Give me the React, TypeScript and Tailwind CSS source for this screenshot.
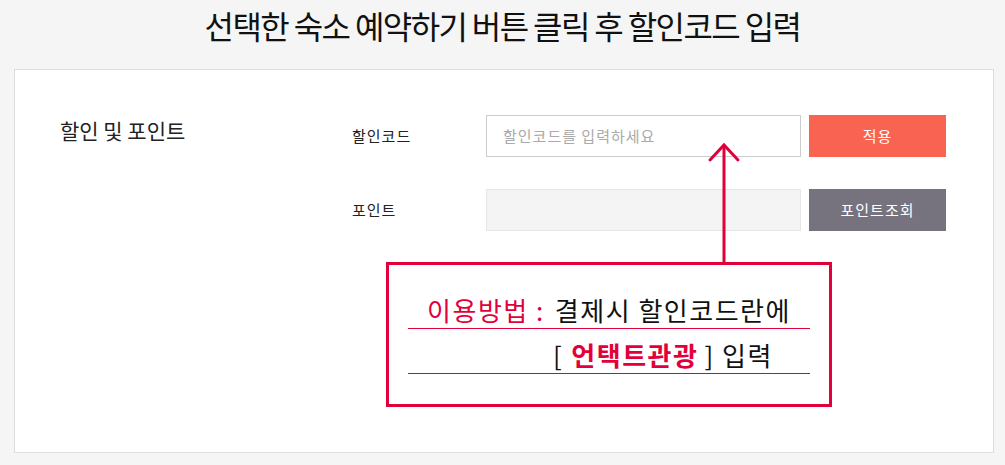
import React from "react";

const RED = "#e2003b";

export default function App() {
  return (
    <div className="w-[1005px] h-[465px] bg-[#f5f5f5] font-['Noto_Sans_CJK_KR',sans-serif] text-[#111] overflow-hidden">
      <h1 className="h-[69px] flex items-center justify-center pb-[19px] text-[32px] font-normal tracking-[-1.6px] text-[#111]">
        선택한 숙소 예약하기 버튼 클릭 후 할인코드 입력
      </h1>
      <div className="relative ml-[14px] w-[980px] h-[384px] bg-white border border-[#dcdcdc] flex">
        <div className="w-[337px] pl-[45px] pt-[44px] text-[21px] leading-[32px] text-[#222]">
          할인 및 포인트
        </div>
        <div className="pt-[45px] flex flex-col">
          <div className="flex items-center h-[42px]">
            <div className="w-[134px] text-[15px] tracking-[1px] text-[#222]">할인코드</div>
            <div className="w-[315px] h-[42px] border border-[#cccccc] bg-white flex items-center pl-[16px] text-[15px] tracking-[1px] text-[#aaaaaa]">
              할인코드를 입력하세요
            </div>
            <button className="ml-[8px] w-[137px] h-[42px] bg-[#f96352] text-white text-[15px] tracking-[1px]">
              적용
            </button>
          </div>
          <div className="flex items-center h-[42px] mt-[32px]">
            <div className="w-[134px] text-[15px] tracking-[1px] text-[#222]">포인트</div>
            <div className="w-[315px] h-[42px] border border-[#e6e6e6] bg-[#f4f4f4]" />
            <button className="ml-[8px] w-[137px] h-[42px] bg-[#76737f] text-white text-[15px] tracking-[1px]">
              포인트조회
            </button>
          </div>
          <div className="ml-[34px] mt-[31px] w-[446px] h-[145px] border-[3px] border-[#e2003b] pt-[19px] flex flex-col items-center">
            <div className="w-[402px] h-[45px] border-b border-[#e2003b] flex items-end justify-center pb-[0px] text-[26px] tracking-[1.5px] leading-[36px]">
              <span className="text-[#e2003b]">이용방법 :</span>
              <span className="ml-[10px] text-[#111]">결제시 할인코드란에</span>
            </div>
            <div className="w-[402px] h-[45px] border-b border-[#e2003b] flex items-end pl-[145px] pb-[0px] text-[26px] tracking-[1.5px] leading-[36px] text-[#111]">
              <span>[</span>
              <span className="ml-[8px] font-bold text-[#e2003b]">언택트관광</span>
              <span className="ml-[6px]">] 입력</span>
            </div>
          </div>
        </div>
        <svg
          className="absolute left-[692px] top-[72px]"
          width="34"
          height="122"
          viewBox="0 0 34 122"
          fill="none"
        >
          <path d="M17 3 L17 122" stroke={RED} strokeWidth="3" />
          <path d="M3 18 L17 3 L31 18" stroke={RED} strokeWidth="3" strokeLinecap="round" strokeLinejoin="miter" />
        </svg>
      </div>
    </div>
  );
}
